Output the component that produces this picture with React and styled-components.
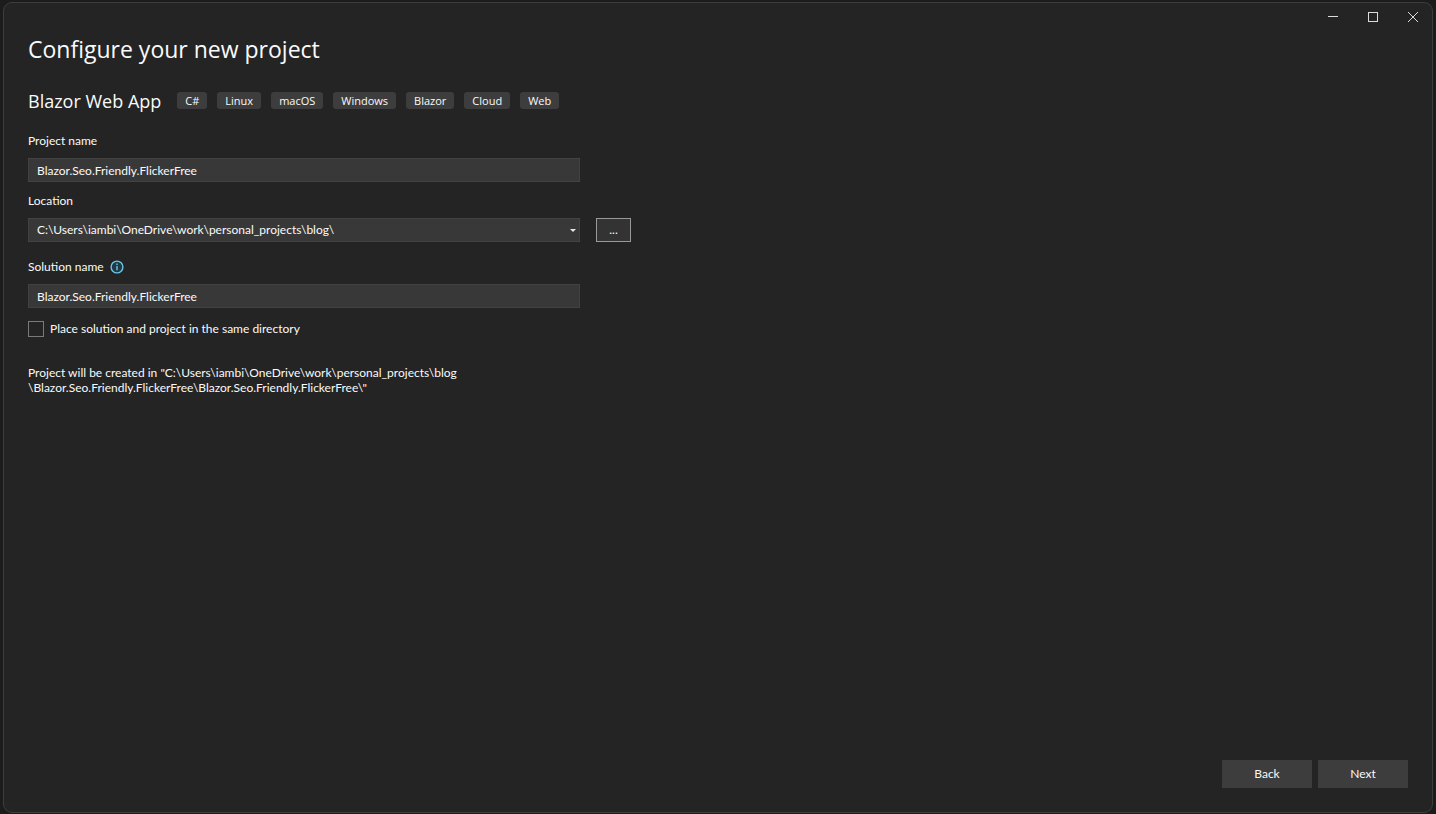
import React, { useState } from 'react';
import styled, { createGlobalStyle } from 'styled-components';

const GlobalStyle = createGlobalStyle`
  * {
    box-sizing: border-box;
  }

  body {
    margin: 0;
    background: #1c1c1c;
    color: #fafafa;
    font-family: Lato, 'Open Sans', sans-serif;
    font-size: 12px;
    line-height: 16px;
  }

  button,
  input,
  select {
    font: inherit;
    color: inherit;
  }
`;

const Screen = styled.div`
  min-height: 100vh;
  display: flex;
  padding: 2px 3px 1px;
`;

const Window = styled.main`
  flex: 1;
  display: flex;
  flex-direction: column;
  background: #242424;
  border: 1px solid #3d3d3d;
  border-radius: 9px;
`;

const TitleBar = styled.header`
  display: flex;
  justify-content: flex-end;
  margin-right: -1px;
`;

const CaptionButton = styled.button`
  width: 40px;
  height: 28px;
  display: flex;
  align-items: center;
  justify-content: center;
  padding: 0;
  background: transparent;
  border: none;
  color: #dcdcdc;

  &:hover {
    background: #3d3d3d;
  }
`;

const Content = styled.div`
  flex: 1;
  display: flex;
  flex-direction: column;
  padding: 0 24px;
`;

const Title = styled.h1`
  margin: 2px 0 0;
  font-family: 'Open Sans', sans-serif;
  font-size: 23px;
  font-weight: 400;
  line-height: 32px;
`;

const TemplateRow = styled.div`
  display: flex;
  align-items: center;
  gap: 16px;
  margin-top: 22px;
  font-family: 'Open Sans', sans-serif;
`;

const TemplateName = styled.h2`
  margin: 0;
  font-size: 18px;
  font-weight: 400;
  line-height: 28px;
`;

const TagList = styled.ul`
  display: flex;
  flex-wrap: wrap;
  gap: 10px;
  margin: 0;
  padding: 0 0 2px;
  list-style: none;
`;

const Tag = styled.li`
  padding: 0 8px;
  background: #3d3d3d;
  border-radius: 3px;
  font-size: 11px;
  line-height: 17px;
`;

const Form = styled.form`
  flex: 1;
  display: flex;
  flex-direction: column;
  margin-top: 17px;
`;

const Field = styled.div`
  display: flex;
  flex-direction: column;
  gap: 9px;
  margin-bottom: ${({ $gap }) => $gap}px;
`;

const LabelRow = styled.div`
  display: flex;
  align-items: center;
  gap: 5px;
`;

const Label = styled.label`
  line-height: 17px;
`;

const InfoIcon = styled.svg`
  width: 16px;
  height: 16px;
`;

const ControlRow = styled.div`
  display: flex;
  gap: 16px;
`;

const TextInput = styled.input`
  width: 100%;
  max-width: 552px;
  height: 24px;
  padding: 0 8px;
  background: #383838;
  border: 1px solid #424242;
  border-radius: 0;
  outline: none;
`;

const SelectBox = styled.div`
  position: relative;
  flex: 0 1 552px;
`;

const Select = styled.select`
  display: block;
  width: 100%;
  height: 24px;
  padding: 0 20px 0 8px;
  appearance: none;
  background: #383838;
  border: 1px solid #424242;
  border-radius: 0;
  outline: none;
`;

const SelectArrow = styled.svg`
  position: absolute;
  top: 11px;
  right: 4px;
  width: 6px;
  height: 3px;
  pointer-events: none;
`;

const BrowseButton = styled.button`
  width: 35px;
  height: 24px;
  padding: 0;
  background: #333333;
  border: 1px solid #999999;
`;

const CheckRow = styled.div`
  display: flex;
  align-items: center;
  gap: 6px;
`;

const CheckBox = styled.input`
  width: 16px;
  height: 16px;
  margin: 0;
  appearance: none;
  background: #242424;
  border: 1px solid #7a7a7a;

  &:checked {
    background: #9184ee;
  }
`;

const Note = styled.p`
  margin: 28px 0 0;
  line-height: 15px;
`;

const Footer = styled.footer`
  display: flex;
  justify-content: flex-end;
  gap: 6px;
  margin-top: auto;
  padding-bottom: 24px;
`;

const FooterButton = styled.button`
  width: 90px;
  height: 28px;
  padding: 0;
  background: #3d3d3d;
  border: none;

  &:hover {
    background: #4a4a4a;
  }
`;

const tags = ['C#', 'Linux', 'macOS', 'Windows', 'Blazor', 'Cloud', 'Web'];

const location = 'C:\\Users\\iambi\\OneDrive\\work\\personal_projects\\blog';

const App = () => {
  const [projectName, setProjectName] = useState('Blazor.Seo.Friendly.FlickerFree');
  const [solutionName, setSolutionName] = useState('Blazor.Seo.Friendly.FlickerFree');
  const [sameDirectory, setSameDirectory] = useState(false);

  return (
    <Screen>
      <GlobalStyle />
      <Window>
        <TitleBar>
          <CaptionButton type="button" aria-label="Minimize">
            <svg width="10" height="10" shapeRendering="crispEdges">
              <rect y="4" width="10" height="1" fill="currentColor" />
            </svg>
          </CaptionButton>
          <CaptionButton type="button" aria-label="Maximize">
            <svg width="10" height="10" fill="none" stroke="currentColor">
              <rect x="0.5" y="0.5" width="9" height="9" />
            </svg>
          </CaptionButton>
          <CaptionButton type="button" aria-label="Close">
            <svg width="10" height="10" fill="none" stroke="currentColor">
              <path d="M0 0L10 10M10 0L0 10" />
            </svg>
          </CaptionButton>
        </TitleBar>

        <Content>
          <Title>Configure your new project</Title>

          <TemplateRow>
            <TemplateName>Blazor Web App</TemplateName>
            <TagList>
              {tags.map((tag) => (
                <Tag key={tag}>{tag}</Tag>
              ))}
            </TagList>
          </TemplateRow>

          <Form onSubmit={(e) => e.preventDefault()}>
            <Field $gap={10}>
              <Label htmlFor="project-name">Project name</Label>
              <TextInput
                id="project-name"
                value={projectName}
                spellCheck={false}
                onChange={(e) => setProjectName(e.target.value)}
              />
            </Field>

            <Field $gap={16}>
              <Label htmlFor="location">Location</Label>
              <ControlRow>
                <SelectBox>
                  <Select id="location">
                    <option>{`${location}\\`}</option>
                  </Select>
                  <SelectArrow viewBox="0 0 6 3">
                    <path d="M0 0H6L3 3Z" fill="#e6e6e6" />
                  </SelectArrow>
                </SelectBox>
                <BrowseButton type="button">...</BrowseButton>
              </ControlRow>
            </Field>

            <Field $gap={12}>
              <LabelRow>
                <Label htmlFor="solution-name">Solution name</Label>
                <InfoIcon viewBox="0 0 16 16" fill="none">
                  <circle cx="8" cy="8" r="5.9" fill="#1f3a45" stroke="#6cc4e8" strokeWidth="1.4" />
                  <path d="M8 7V11.2M8 4.6V6" stroke="#6cc4e8" strokeWidth="1.4" />
                </InfoIcon>
              </LabelRow>
              <TextInput
                id="solution-name"
                value={solutionName}
                spellCheck={false}
                onChange={(e) => setSolutionName(e.target.value)}
              />
            </Field>

            <CheckRow>
              <CheckBox
                id="same-directory"
                type="checkbox"
                checked={sameDirectory}
                onChange={(e) => setSameDirectory(e.target.checked)}
              />
              <Label htmlFor="same-directory">Place solution and project in the same directory</Label>
            </CheckRow>

            <Note>
              Project will be created in "{location}
              <br />
              {`\\${solutionName}\\${projectName}\\"`}
            </Note>

            <Footer>
              <FooterButton type="button">Back</FooterButton>
              <FooterButton type="submit">Next</FooterButton>
            </Footer>
          </Form>
        </Content>
      </Window>
    </Screen>
  );
};

export default App;
